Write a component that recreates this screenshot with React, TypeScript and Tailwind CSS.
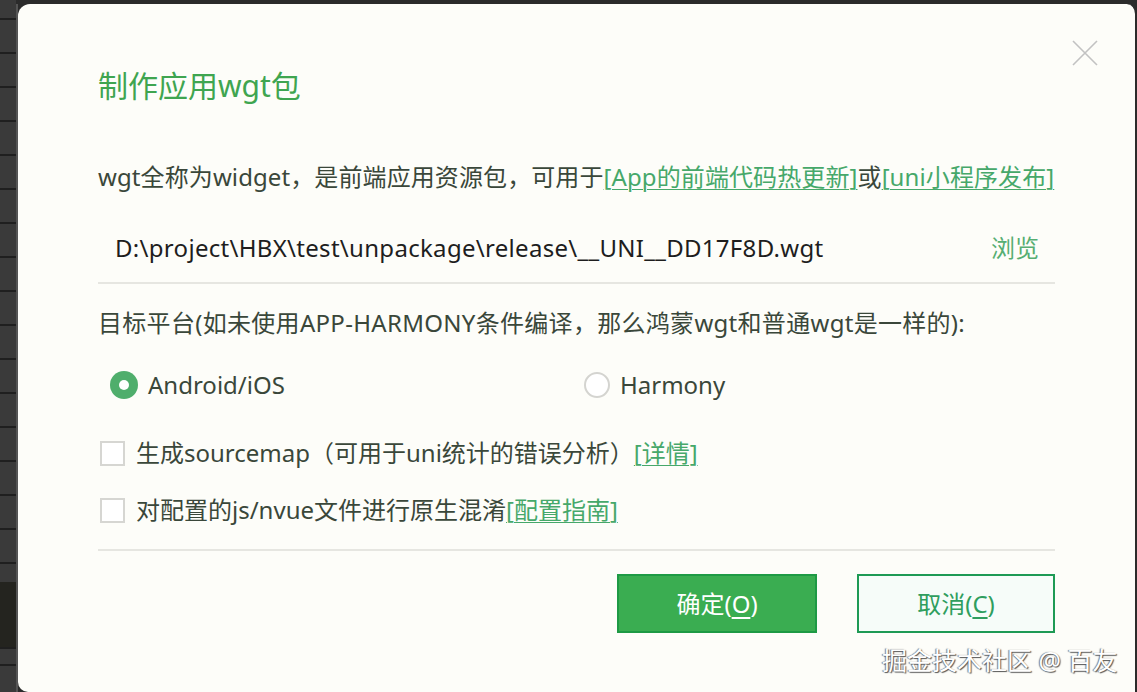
const font = { fontFamily: '"Noto Sans", "Noto Sans CJK SC", sans-serif' };

function Radio({ checked, label }: { checked?: boolean; label: string }) {
  return (
    <div className="flex items-center gap-[10px]">
      {checked ? (
        <span className="w-[28px] h-[28px] rounded-full bg-[#4fae6c] flex items-center justify-center">
          <span className="w-[10px] h-[10px] rounded-full bg-white" />
        </span>
      ) : (
        <span className="w-[26px] h-[26px] rounded-full border-2 border-[#d4d4d0] bg-white" />
      )}
      <span className="text-[24px] text-[#3a473a]">{label}</span>
    </div>
  );
}

function Checkbox({ children }: { children: React.ReactNode }) {
  return (
    <div className="flex items-center h-[40px] pl-[2px]">
      <span className="w-[25px] h-[25px] border-2 border-[#d6d6d2] bg-white shrink-0" />
      <span className="ml-[11px] text-[24px] text-[#3a473a] whitespace-nowrap">{children}</span>
    </div>
  );
}

function Link({ children }: { children: React.ReactNode }) {
  return <span className="text-[#46a86a] underline underline-offset-[3px] decoration-1">{children}</span>;
}

export default function App() {
  return (
    <div className="h-[692px] w-full bg-[#2b2b2b] flex overflow-hidden" style={font}>
      {/* editor gutter behind the dialog */}
      <div className="w-[16px] shrink-0 flex flex-col pt-[4px] bg-[#3a3a3a]">
        {Array.from({ length: 17 }).map((_, i) => (
          <div key={i} className="h-[34px] shrink-0 border-b-2 border-[#1f1f1f] first:h-[16px]" />
        ))}
        <div className="h-[18px] shrink-0" />
        <div className="h-[67px] shrink-0 bg-[#24241f] border-b-2 border-[#1f1f1f]" />
        <div className="h-[17px] shrink-0 border-b-2 border-[#1f1f1f]" />
      </div>
      <div className="w-[2px] shrink-0 bg-[#555] mt-[4px]" />

      <div className="relative flex-1 mt-[4px] bg-[#fdfdf9] rounded-tl-[12px] rounded-tr-[10px] rounded-bl-[10px] border-r-2 border-[#2b2b2b] px-[80px] flex flex-col">
        <button className="absolute top-[36px] right-[37px]">
          <svg width="26" height="26" viewBox="0 0 26 26" stroke="#c2c2c2" strokeWidth="1.6" fill="none">
            <path d="M1 1L25 25M25 1L1 25" />
          </svg>
        </button>

        <h1 className="mt-[62px] h-[40px] leading-[40px] text-[30px] text-[#3fa550]">制作应用wgt包</h1>

        <p className="mt-[51px] h-[40px] leading-[40px] text-[24px] tracking-[0.1px] text-[#3a473a] whitespace-nowrap">
          wgt全称为widget，是前端应用资源包，可用于<Link>[App的前端代码热更新]</Link>或<Link>[uni小程序发布]</Link>
        </p>

        <div className="mt-[31px] h-[40px] flex items-center justify-between pl-[17px] pr-[16px]">
          <span className="text-[24px] tracking-[0.3px] text-[#1e1e1e]">D:\project\HBX\test\unpackage\release\__UNI__DD17F8D.wgt</span>
          <span className="text-[24px] text-[#56ae72]">浏览</span>
        </div>

        <div className="mt-[14px] h-[2px] bg-[#e6e6e1]" />

        <p className="mt-[19px] h-[40px] leading-[40px] text-[24px] tracking-[0.3px] text-[#3a473a] whitespace-nowrap">
          目标平台(如未使用APP-HARMONY条件编译，那么鸿蒙wgt和普通wgt是一样的):
        </p>

        <div className="mt-[22px] h-[40px] flex items-center pl-[12px]">
          <div className="w-[474px]">
            <Radio checked label="Android/iOS" />
          </div>
          <Radio label="Harmony" />
        </div>

        <div className="mt-[28px]">
          <Checkbox>
            生成sourcemap（可用于uni统计的错误分析）<Link>[详情]</Link>
          </Checkbox>
        </div>
        <div className="mt-[17px]">
          <Checkbox>
            对配置的js/nvue文件进行原生混淆<Link>[配置指南]</Link>
          </Checkbox>
        </div>

        <div className="mt-[19px] h-[2px] bg-[#e6e6e1]" />

        <div className="mt-[23px] flex justify-end gap-[40px]">
          <button className="w-[200px] h-[59px] bg-[#3aad51] border-2 border-[#1e9a45] text-white text-[24px]">
            确定(<span className="underline underline-offset-[4px]">O</span>)
          </button>
          <button className="w-[198px] h-[59px] bg-[#f6fcf9] border-2 border-[#1e9a55] text-[#2f9e5e] text-[24px]">
            取消(<span className="underline underline-offset-[4px]">C</span>)
          </button>
        </div>

        <span className="absolute left-[864px] top-[638px] text-[25px] text-white whitespace-nowrap [text-shadow:1px_1px_1px_#555,-1px_0_1px_#777]">
          掘金技术社区 @ 百友
        </span>
      </div>
    </div>
  );
}
